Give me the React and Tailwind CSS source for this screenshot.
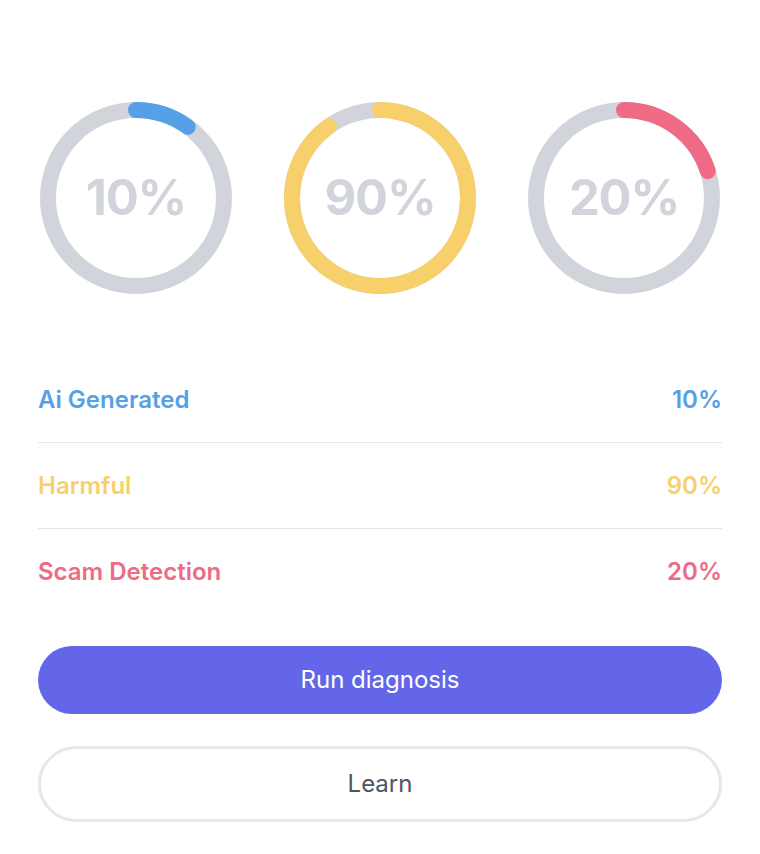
import React from 'react';

const metrics = [
  { label: 'Ai Generated', value: 10, color: '#55a0e6' },
  { label: 'Harmful', value: 90, color: '#f7cf6b' },
  { label: 'Scam Detection', value: 20, color: '#ef6a84' },
];

function Ring({ value, color }) {
  const size = 192;
  const stroke = 16;
  const r = (size - stroke) / 2;
  const c = 2 * Math.PI * r;
  return (
    <div className="relative w-[192px] h-[192px]">
      <svg width={size} height={size} className="-rotate-90">
        <circle cx={size / 2} cy={size / 2} r={r} fill="none" stroke="#d1d5db" strokeWidth={stroke} />
        <circle
          cx={size / 2}
          cy={size / 2}
          r={r}
          fill="none"
          stroke={color}
          strokeWidth={stroke}
          strokeLinecap="round"
          strokeDasharray={`${(c * value) / 100} ${c}`}
        />
      </svg>
      <div className="absolute inset-0 flex items-center justify-center text-[49px] font-bold text-[#d1d5db] tracking-tight">
        {value}%
      </div>
    </div>
  );
}

export default function App() {
  return (
    <main className="min-h-screen bg-white px-[38px] pt-[102px] font-['Inter',sans-serif]">
      <div className="flex justify-between px-[2px]">
        {metrics.map((m) => (
          <Ring key={m.label} value={m.value} color={m.color} />
        ))}
      </div>

      <div className="mt-[63px]">
        {metrics.map((m, i) => (
          <div
            key={m.label}
            className={`flex items-center justify-between h-[86px] text-[24px] font-semibold ${
              i < metrics.length - 1 ? 'border-b border-[#e5e7eb]' : ''
            }`}
            style={{ color: m.color }}
          >
            <span>{m.label}</span>
            <span>{m.value}%</span>
          </div>
        ))}
      </div>

      <button className="mt-[31px] w-full h-[68px] rounded-full bg-[#6366e9] text-white text-[24px]">
        Run diagnosis
      </button>
      <button className="mt-[32px] w-full h-[76px] rounded-full border-[3px] border-[#e5e7eb] bg-white text-[#4b5563] text-[24px]">
        Learn
      </button>
    </main>
  );
}
